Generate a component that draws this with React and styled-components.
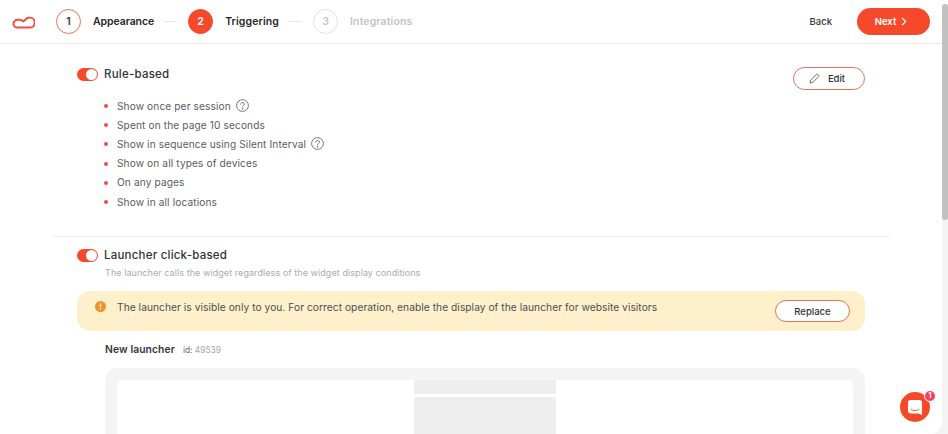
import React from "react";
import styled, { createGlobalStyle } from "styled-components";

const Global = createGlobalStyle`
  html, body { margin: 0; padding: 0; height: 100%; overflow: hidden; background: #fff; }
  body { font-family: "Inter", "Liberation Sans", sans-serif; color: #2f3136; }
  * { box-sizing: border-box; }
`;
const Shell = styled.div`
  width: 948px; height: 434px; display: flex; overflow: hidden; background: #f3f3f3;
`;
const Page = styled.div`
  width: 942px; height: 434px; background: #fff; display: flex; flex-direction: column; overflow: hidden;
  position: relative; border-radius: 0 0 12px 0;
`;
const Scrollbar = styled.div`
  width: 6px; height: 434px; padding-top: 4px; background: linear-gradient(#fff 0 5px, transparent 5px);
`;
const Thumb = styled.div`
  width: 6px; height: 216px; background: #c1c1c1; border-radius: 3px;
`;
const Header = styled.header`
  height: 44px; flex: none; border-bottom: 1px solid #e9e9e9; display: flex; align-items: center;
  padding: 0 12px;
`;
const Steps = styled.div`
  display: flex; align-items: center; margin-left: 21px; flex: 1;
`;
const Circle = styled.div`
  width: 25px; height: 25px; border-radius: 50%; display: flex; align-items: center; justify-content: center;
  font-size: 10.5px; font-weight: 600; flex: none;
  color: ${p => p.$state === "active" ? "#fff" : p.$state === "off" ? "#c4c4c4" : "#2f3136"};
  background: ${p => p.$state === "active" ? "#f4492b" : "#fff"};
  border: 1px solid ${p => p.$state === "off" ? "#e2e2e2" : p.$state === "active" ? "#f4492b" : "#e8705c"};
`;
const StepLabel = styled.span`
  font-size: 10.5px; font-weight: 600; margin-left: 12px; white-space: nowrap;
  letter-spacing: ${p => p.$tight ? "-.08px" : ".12px"};
  color: ${p => p.$off ? "#c4c4c4" : "#25272b"};
`;
const Dash = styled.span`
  width: 13px; height: 1px; background: #e6e6e6; margin: 0 11px 0 10px; flex: none;
`;
const BackBtn = styled.span`
  font-size: 9.5px; font-weight: 500; color: #33353a; margin-right: 25px;
`;
const NextBtn = styled.button`
  width: 73px; height: 27px; border: 0; border-radius: 14px; background: #f4492b; color: #fff;
  font: 600 9.5px "Inter", sans-serif; display: flex; align-items: center; justify-content: center; gap: 5px;
  padding: 0 5px 0 0;
`;
const Content = styled.main`
  flex: 1; display: flex; flex-direction: column; padding: 0 52px; min-height: 0;
`;
const RuleSection = styled.section`
  padding: 23px 25px 0; height: 193px; border-bottom: 1px solid #eeeeee; flex: none;
  display: flex; flex-direction: column;
`;
const TitleRow = styled.div`
  display: flex; align-items: center; justify-content: space-between; height: 14px;
`;
const TitleLeft = styled.div`
  display: flex; align-items: center; gap: 6px;
`;
const Toggle = styled.span`
  width: 21px; height: 13px; border-radius: 7px; background: #f4492b; position: relative; flex: none; display: block;
  &::after { content: ""; position: absolute; right: 1px; top: 1px; width: 11px; height: 11px; border-radius: 50%; background: #fff; }
`;
const Title = styled.h2`
  margin: 0; font-size: 11.5px; font-weight: 500; color: #2f3136; letter-spacing: .22px; white-space: nowrap;
`;
const EditBtn = styled.button`
  width: 72px; height: 23px; margin-top: 9px; background: #fff; border: 1px solid #e8705c; border-radius: 12px;
  font: 500 9.5px "Inter", sans-serif; color: #2f3136; display: flex; align-items: center; justify-content: center; gap: 8px;
  padding: 0 4px 0 0;
`;
const List = styled.ul`
  list-style: none; margin: 15px 0 0 27px; padding: 0; display: flex; flex-direction: column;
`;
const Item = styled.li`
  height: 19.2px; display: flex; align-items: center; font-size: 10.15px; color: #5a5c61; letter-spacing: .12px; position: relative;
  padding-left: 13px; white-space: nowrap;
  &::before { content: ""; position: absolute; left: 0; top: 8px; width: 4px; height: 4px; border-radius: 50%; background: #f0503a; }
  svg { margin-left: 5px; }
`;
const LauncherSection = styled.section`
  padding: 11px 25px 0; display: flex; flex-direction: column; flex: 1; min-height: 0;
`;
const Sub = styled.p`
  margin: 5px 0 0 28px; font-size: 9px; color: #a9abae; white-space: nowrap; letter-spacing: .07px; line-height: 12px;
`;
const Notice = styled.div`
  margin-top: 12px; width: 788px; height: 40px; flex: none; background: #fdf0cb; border-radius: 13px; display: flex; align-items: center;
  padding: 0 15px 0 18px;
`;
const NoticeText = styled.span`
  flex: 1; font-size: 10.2px; color: #4d4e50; margin: -9px 0 0 11px; white-space: nowrap; letter-spacing: .055px;
`;
const ReplaceBtn = styled.button`
  width: 75px; height: 22px; background: #fff; border: 1px solid #e8705c; border-radius: 11px;
  font: 500 9.5px "Inter", sans-serif; color: #2f3136; padding: 0;
`;
const NameRow = styled.div`
  margin: 12px 0 0 28px; display: flex; align-items: baseline; gap: 8px; height: 13px;
`;
const Name = styled.span`
  font-size: 10.3px; font-weight: 600; color: #33353a; letter-spacing: .1px;
`;
const Id = styled.span`
  font-size: 8.4px; color: #6a6a6a;
  b { font-weight: 400; color: #a5a5a5; }
`;
const Preview = styled.div`
  margin: 13px 0 0 28px; width: 760px; height: 80px; flex: none; background: #f4f4f4; border-radius: 12px 12px 0 0;
  padding: 12px 12px 0;
`;
const PreviewInner = styled.div`
  height: 100%; background: #fff; border-radius: 6px 6px 0 0; display: flex; flex-direction: column; align-items: center; gap: 3px;
`;
const Skeleton = styled.div`
  width: 142px; flex: none; height: ${p => p.$h}px; background: #eeeeee; border-radius: 2px;
`;
const Chat = styled.div`
  position: absolute; left: 900px; top: 392px; width: 30px; height: 30px; border-radius: 50%; background: #f4492b;
  display: flex; align-items: center; justify-content: center;
`;
const Badge = styled.span`
  position: absolute; right: -6px; top: -2px; width: 12px; height: 12px; border-radius: 50%; background: #f4445a; border: 1.5px solid #fff;
  color: #fff; font-size: 7px; font-weight: 700; line-height: 9px; text-align: center;
`;

const Help = () => (
  <svg width="13" height="13" viewBox="0 0 13 13" fill="none" stroke="#55575c" strokeWidth=".8">
    <circle cx="6.5" cy="6.5" r="5.9" />
    <path d="M4.7 5.2c0-2.3 3.7-2.3 3.7 0 0 1.4-1.9 1.4-1.9 2.8" strokeLinecap="round" />
    <circle cx="6.5" cy="9.9" r=".35" fill="#55575c" />
  </svg>
);
const items = [
  ["Show once per session", true],
  ["Spent on the page 10 seconds"],
  ["Show in sequence using Silent Interval", true],
  ["Show on all types of devices"],
  ["On any pages"],
  ["Show in all locations"],
];

export default function App() {
  return (
    <Shell>
      <Global />
      <Page>
        <Header>
          <svg width="23" height="14" viewBox="0 0 23 14" fill="none" stroke="#ee4f37" strokeWidth="2" style={{ flex: "none" }}>
            <path d="M5 12.6h12.6a5 5 0 0 0 .2-10c-3.4-.2-4.7 2.2-6.2 3.8C10 5 8.2 4.6 5.8 4.8A3.9 3.9 0 0 0 5 12.6z" strokeLinecap="round" strokeLinejoin="round" />
          </svg>
          <Steps>
            <Circle>1</Circle><StepLabel $tight>Appearance</StepLabel><Dash />
            <Circle $state="active">2</Circle><StepLabel>Triggering</StepLabel><Dash />
            <Circle $state="off">3</Circle><StepLabel $off>Integrations</StepLabel>
          </Steps>
          <BackBtn>Back</BackBtn>
          <NextBtn>Next
            <svg width="6" height="9" viewBox="0 0 6 9" fill="none" stroke="#fff" strokeWidth="1.2"><path d="M1 .8 4.7 4.5 1 8.2" /></svg>
          </NextBtn>
        </Header>
        <Content>
          <RuleSection>
            <TitleRow>
              <TitleLeft><Toggle /><Title>Rule-based</Title></TitleLeft>
              <EditBtn>
                <svg width="11" height="11" viewBox="0 0 11 11" fill="none" stroke="#4a4c50" strokeWidth=".8" strokeLinejoin="round">
                  <path d="M1 10 1.6 7.2 7.3 1.5a1.2 1.2 0 0 1 1.7 0l.5.5a1.2 1.2 0 0 1 0 1.7L3.8 9.4z" />
                </svg>
                Edit
              </EditBtn>
            </TitleRow>
            <List>
              {items.map(([t, h]) => <Item key={t}>{t}{h && <Help />}</Item>)}
            </List>
          </RuleSection>
          <LauncherSection>
            <TitleLeft><Toggle /><Title>Launcher click-based</Title></TitleLeft>
            <Sub>The launcher calls the widget regardless of the widget display conditions</Sub>
            <Notice>
              <svg width="11" height="11" viewBox="0 0 11 11" style={{ flex: "none", marginTop: -9 }}>
                <circle cx="5.5" cy="5.5" r="5.5" fill="#ec9330" />
                <rect x="4.8" y="2.3" width="1.4" height="4" rx=".6" fill="#fdf0cb" />
                <circle cx="5.5" cy="8" r=".8" fill="#fdf0cb" />
              </svg>
              <NoticeText>The launcher is visible only to you. For correct operation, enable the display of the launcher for website visitors</NoticeText>
              <ReplaceBtn>Replace</ReplaceBtn>
            </Notice>
            <NameRow><Name>New launcher</Name><Id>id: <b>49539</b></Id></NameRow>
            <Preview>
              <PreviewInner>
                <Skeleton $h={14} />
                <Skeleton $h={60} />
              </PreviewInner>
            </Preview>
          </LauncherSection>
        </Content>
        <Chat>
          <svg width="14" height="15" viewBox="0 0 14 15">
            <path d="M2.5 0h9A2.5 2.5 0 0 1 14 2.5V15l-3.4-1.6H2.5A2.5 2.5 0 0 1 0 11V2.5A2.5 2.5 0 0 1 2.5 0z" fill="#fff" />
            <path d="M3 9.5c2.2 1.5 5.8 1.5 8 0" fill="none" stroke="#f4492b" strokeWidth=".9" strokeLinecap="round" />
          </svg>
          <Badge>1</Badge>
        </Chat>
      </Page>
      <Scrollbar><Thumb /></Scrollbar>
    </Shell>
  );
}
